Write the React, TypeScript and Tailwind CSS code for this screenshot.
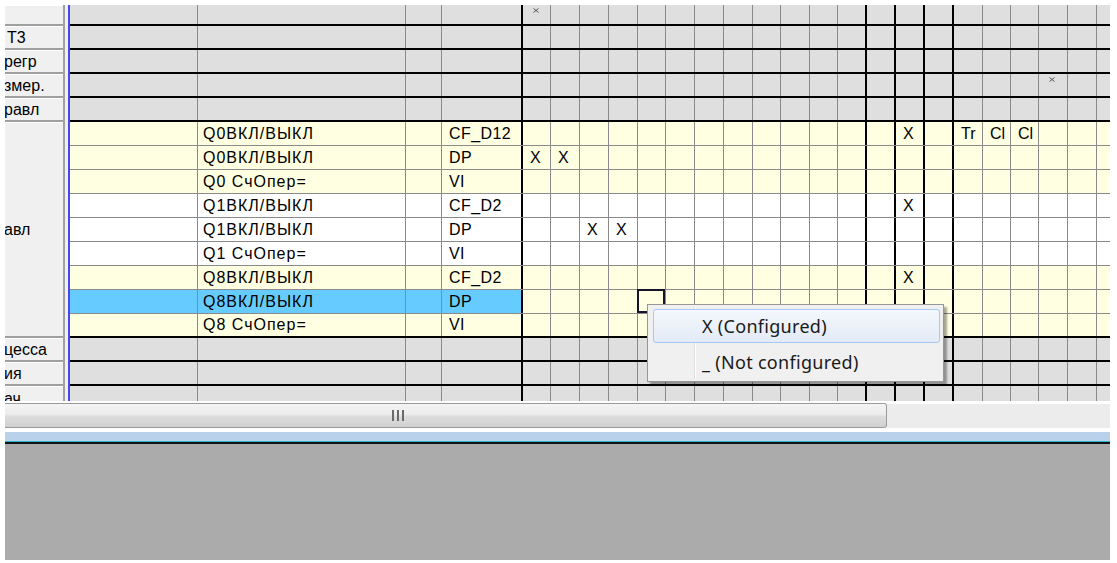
import React from 'react';
import clsx from 'clsx';

type Kind = 'gray' | 'yellow' | 'white';

interface RowDef {
    kind: Kind;
    h: string;
    line: 'black' | 'gray' | 'none';
    name?: string;
    type?: string;
    sel?: boolean;
    bits?: Record<number, string>;
    marks?: number[];
    focus?: number;
}

// widths of the bit columns (incl. right grid line)
const BIT_W = [
    'w-[28px]', 'w-[29px]', 'w-[29px]', 'w-[29px]', 'w-[28px]', 'w-[29px]', 'w-[29px]',
    'w-[29px]', 'w-[28px]', 'w-[29px]', 'w-[28px]', 'w-[29px]', 'w-[29px]', 'w-[29px]',
    'w-[29px]', 'w-[29px]', 'w-[28px]', 'w-[28px]', 'w-[29px]', 'w-[29px]', 'w-[14px]',
];

const BG: Record<Kind, string> = {
    gray: 'bg-[#dfdfdf]',
    yellow: 'bg-[#ffffe1]',
    white: 'bg-white',
};

const LINE = {
    black: 'border-b-2 border-black',
    gray: 'border-b border-[#8a8a8a]',
    none: '',
};

const rows: RowDef[] = [
    { kind: 'gray', h: 'h-[21px]', line: 'black', marks: [0] },
    { kind: 'gray', h: 'h-[24px]', line: 'black' },
    { kind: 'gray', h: 'h-[24px]', line: 'black' },
    { kind: 'gray', h: 'h-[24px]', line: 'black', marks: [18] },
    { kind: 'gray', h: 'h-[24px]', line: 'black' },
    { kind: 'yellow', h: 'h-[24px]', line: 'gray', name: 'Q0ВКЛ/ВЫКЛ', type: 'CF_D12', bits: { 13: 'X', 15: 'Tr', 16: 'Cl', 17: 'Cl' } },
    { kind: 'yellow', h: 'h-[24px]', line: 'gray', name: 'Q0ВКЛ/ВЫКЛ', type: 'DP', bits: { 0: 'X', 1: 'X' } },
    { kind: 'yellow', h: 'h-[24px]', line: 'gray', name: 'Q0 СчОпер=', type: 'VI' },
    { kind: 'white', h: 'h-[24px]', line: 'gray', name: 'Q1ВКЛ/ВЫКЛ', type: 'CF_D2', bits: { 13: 'X' } },
    { kind: 'white', h: 'h-[24px]', line: 'gray', name: 'Q1ВКЛ/ВЫКЛ', type: 'DP', bits: { 2: 'X', 3: 'X' } },
    { kind: 'white', h: 'h-[24px]', line: 'gray', name: 'Q1 СчОпер=', type: 'VI' },
    { kind: 'yellow', h: 'h-[24px]', line: 'gray', name: 'Q8ВКЛ/ВЫКЛ', type: 'CF_D2', bits: { 13: 'X' } },
    { kind: 'yellow', h: 'h-[24px]', line: 'gray', name: 'Q8ВКЛ/ВЫКЛ', type: 'DP', sel: true, focus: 4 },
    { kind: 'yellow', h: 'h-[24px]', line: 'black', name: 'Q8 СчОпер=', type: 'VI' },
    { kind: 'gray', h: 'h-[24px]', line: 'black' },
    { kind: 'gray', h: 'h-[24px]', line: 'black' },
    { kind: 'gray', h: 'h-[15px]', line: 'none' },
];

const headers: { h: string; text: string; cut?: boolean; top?: boolean }[] = [
    { h: 'h-[21px]', text: '' },
    { h: 'h-[24px]', text: 'Т3' },
    { h: 'h-[24px]', text: 'регр', cut: true },
    { h: 'h-[24px]', text: 'змер.', cut: true },
    { h: 'h-[24px]', text: 'равл', cut: true },
    { h: 'h-[216px]', text: 'авл', cut: true },
    { h: 'h-[24px]', text: 'цесса', cut: true },
    { h: 'h-[24px]', text: 'ия', cut: true },
    { h: 'h-[15px]', text: 'ач', cut: true, top: true },
];

const Mark = () => (
    <svg width="6" height="5" viewBox="0 0 6 5" className="self-start mt-[3px] ml-[3px]">
        <path d="M0.5 0.5 L5.5 4.5 M5.5 0.5 L0.5 4.5" stroke="#555" strokeWidth="1" />
    </svg>
);

function GridRow({ row }: { row: RowDef }) {
    const bg = BG[row.kind];
    const selBg = row.sel ? 'bg-[#66ccff]' : bg;
    return (
        <div className={clsx('flex shrink-0', row.h, LINE[row.line])}>
            <div className={clsx('w-[128px] shrink-0 border-r border-[#8a8a8a]', selBg)} />
            <div className={clsx('w-[208px] shrink-0 border-r border-[#8a8a8a] flex items-center pl-[5px] tracking-[1px]', selBg)}>
                {row.name}
            </div>
            <div className={clsx('w-[36px] shrink-0 border-r border-[#8a8a8a]', selBg)} />
            <div className={clsx('w-[81px] shrink-0 border-r-2 border-black flex items-center pl-[7px] tracking-[0.4px]', selBg)}>
                {row.type}
            </div>
            {BIT_W.map((w, i) => {
                const black = i >= 11 && i <= 14;
                const last = i === BIT_W.length - 1;
                return (
                    <div
                        key={i}
                        className={clsx(
                            'relative shrink-0 flex items-center pl-[7px]',
                            w,
                            bg,
                            !last && (black ? 'border-r-2 border-black' : 'border-r border-[#8a8a8a]'),
                        )}
                    >
                        {row.marks?.includes(i) && <Mark />}
                        {row.bits?.[i]}
                        {row.focus === i && (
                            <span className="absolute -left-[1px] -top-[1px] w-[28px] h-[24px] border-2 border-[#14142a]" />
                        )}
                    </div>
                );
            })}
        </div>
    );
}

function ContextMenu() {
    return (
        <div className="absolute left-[647px] top-[304px] w-[297px] h-[78px] bg-[#f0f0f0] border border-[#979797] shadow-[3px_3px_2px_rgba(0,0,0,0.35)] pl-[5px] pr-[3px] pt-[4px] flex flex-col gap-[1px] font-['Noto_Sans',sans-serif] text-[18px] tracking-[0.3px] text-[#1a1a1a]">
            <div className="absolute left-[46px] top-[2px] bottom-[2px] w-[2px] border-l border-[#e0e0e0] bg-white" />
            <div className="relative h-[34px] rounded-[3px] border border-[#a6c8f2] bg-gradient-to-b from-[#f4f7fc] to-[#e3ebf7] flex items-center pl-[48px]">
                X (Configured)
            </div>
            <div className="relative h-[34px] flex items-center pl-[49px] pt-[3px]">
                _ (Not configured)
            </div>
        </div>
    );
}

export default function App() {
    return (
        <div className="relative w-[1117px] h-[563px] bg-white pt-[5px] pl-[5px] pr-[7px] pb-[3px] flex flex-col overflow-hidden font-['Liberation_Sans',Arial,sans-serif] text-[16px] text-black">
            <div className="h-[396px] flex overflow-hidden shrink-0">
                <div className="w-[58px] shrink-0 flex flex-col">
                    {headers.map((h, i) => (
                        <div
                            key={i}
                            className={clsx(
                                'shrink-0 overflow-hidden bg-[#f0f0f0] border-t border-white flex whitespace-nowrap',
                                h.h,
                                i < headers.length - 1 && 'border-b-2 border-b-[#a0a0a0]',
                                h.top ? 'items-start' : 'items-center',
                                h.cut ? '-indent-[1px]' : 'pl-[2px]',
                            )}
                        >
                            {h.text}
                        </div>
                    ))}
                </div>
                <div className="w-[2px] shrink-0 bg-[#a0a0a0]" />
                <div className="w-[3px] shrink-0 bg-[#f0f0f0]" />
                <div className="w-[2px] shrink-0 bg-[#4646f2]" />
                <div className="flex-1 flex flex-col overflow-hidden">
                    {rows.map((r, i) => (
                        <GridRow key={i} row={r} />
                    ))}
                </div>
            </div>
            <div className="h-[2px] shrink-0 bg-white" />
            <div className="h-[25px] shrink-0 flex">
                <div className="w-[882px] h-full rounded-r-[3px] border border-l-0 border-[#9a9a9a] bg-[linear-gradient(to_bottom,#f4f4f4_0%,#ececec_45%,#dcdcdc_55%,#d0d0d0_100%)] flex items-center pl-[387px]">
                    <div className="flex gap-[3px] h-[11px]">
                        <span className="w-[2px] h-full bg-[#6a6a6a]" />
                        <span className="w-[2px] h-full bg-[#6a6a6a]" />
                        <span className="w-[2px] h-full bg-[#6a6a6a]" />
                    </div>
                </div>
                <div className="flex-1 bg-[#ececec] border-t border-white" />
            </div>
            <div className="h-[4px] shrink-0 bg-white" />
            <div className="h-[9px] shrink-0 bg-[#b9d1ea]" />
            <div className="h-[1px] shrink-0 bg-[#2bb5d0]" />
            <div className="h-[2px] shrink-0 bg-[#111]" />
            <div className="flex-1 bg-[#ababab]" />
            <ContextMenu />
        </div>
    );
}
